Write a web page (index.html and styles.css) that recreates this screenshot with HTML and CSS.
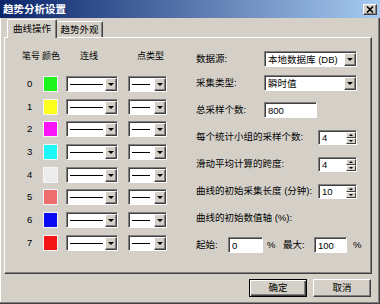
FILE: index.html
```html
<!DOCTYPE html>
<html>
<head>
<meta charset="utf-8">
<link rel="stylesheet" href="styles.css">
</head>
<body>
<div class="window">
  <div class="titlebar">
    <span class="title">趋势分析设置</span>
    <span class="close"><svg width="8" height="7" viewBox="0 0 8 7"><path d="M1 0.5 L7 6.5 M7 0.5 L1 6.5" stroke="#000" stroke-width="1.6"/></svg></span>
  </div>
  <div class="tabs">
    <div class="tab active">曲线操作</div>
    <div class="tab second">趋势外观</div>
  </div>
  <div class="panel">
    <div class="left">
      <div class="head">
        <span class="h-num">笔号</span><span class="h-color">颜色</span><span class="h-line">连线</span><span class="h-pt">点类型</span>
      </div>
      <div class="pens">
        <div class="pen"><span class="num">0</span><span class="sw" style="background:#1ef51e"></span><span class="combo line"><span class="field"><i class="stroke"></i></span><span class="arrow"></span></span><span class="combo pt"><span class="field"><i class="stroke"></i></span><span class="arrow"></span></span></div>
        <div class="pen"><span class="num">1</span><span class="sw" style="background:#ffff1e"></span><span class="combo line"><span class="field"><i class="stroke"></i></span><span class="arrow"></span></span><span class="combo pt"><span class="field"><i class="stroke"></i></span><span class="arrow"></span></span></div>
        <div class="pen"><span class="num">2</span><span class="sw" style="background:#fa14fa"></span><span class="combo line"><span class="field"><i class="stroke"></i></span><span class="arrow"></span></span><span class="combo pt"><span class="field"><i class="stroke"></i></span><span class="arrow"></span></span></div>
        <div class="pen"><span class="num">3</span><span class="sw" style="background:#1ef8f8"></span><span class="combo line"><span class="field"><i class="stroke"></i></span><span class="arrow"></span></span><span class="combo pt"><span class="field"><i class="stroke"></i></span><span class="arrow"></span></span></div>
        <div class="pen"><span class="num">4</span><span class="sw" style="background:#ececec"></span><span class="combo line"><span class="field"><i class="stroke"></i></span><span class="arrow"></span></span><span class="combo pt"><span class="field"><i class="stroke"></i></span><span class="arrow"></span></span></div>
        <div class="pen"><span class="num">5</span><span class="sw" style="background:#ee6e6e"></span><span class="combo line"><span class="field"><i class="stroke"></i></span><span class="arrow"></span></span><span class="combo pt"><span class="field"><i class="stroke"></i></span><span class="arrow"></span></span></div>
        <div class="pen"><span class="num">6</span><span class="sw" style="background:#0a0af5"></span><span class="combo line"><span class="field"><i class="stroke"></i></span><span class="arrow"></span></span><span class="combo pt"><span class="field"><i class="stroke"></i></span><span class="arrow"></span></span></div>
        <div class="pen"><span class="num">7</span><span class="sw" style="background:#f51414"></span><span class="combo line"><span class="field"><i class="stroke"></i></span><span class="arrow"></span></span><span class="combo pt"><span class="field"><i class="stroke"></i></span><span class="arrow"></span></span></div>
      </div>
    </div>
    <div class="right">
      <div class="rrow"><span class="lbl">数据源:</span><span class="combo wide"><span class="field txt">本地数据库 (DB)</span><span class="arrow"></span></span></div>
      <div class="rrow tight"><span class="lbl">采集类型:</span><span class="combo wide"><span class="field txt">瞬时值</span><span class="arrow"></span></span></div>
      <div class="rrow"><span class="lbl">总采样个数:</span><span class="edit e800">800</span></div>
      <div class="rrow"><span class="lbl long">每个统计小组的采样个数:</span><span class="spin"><span class="field txt">4</span><span class="btns"><span class="up"></span><span class="dn"></span></span></span></div>
      <div class="rrow"><span class="lbl long">滑动平均计算的跨度:</span><span class="spin"><span class="field txt">4</span><span class="btns"><span class="up"></span><span class="dn"></span></span></span></div>
      <div class="rrow"><span class="lbl long">曲线的初始采集长度 (分钟):</span><span class="spin"><span class="field txt">10</span><span class="btns"><span class="up"></span><span class="dn"></span></span></span></div>
      <div class="rrow"><span class="lbl">曲线的初始数值轴 (%):</span></div>
      <div class="rrow"><span class="lbl short">起始:</span><span class="edit e-min">0</span><span class="pct">%</span><span class="lbl max">最大:</span><span class="edit e-max">100</span><span class="pct last">%</span></div>
    </div>
  </div>
  <div class="buttons">
    <button class="btn default">确定</button>
    <button class="btn">取消</button>
  </div>
</div>
</body>
</html>
```
FILE: styles.css
```css
* { box-sizing: border-box; }
html, body { margin: 0; padding: 0; }
body {
  width: 380px; height: 304px; overflow: hidden;
  font-family: "Liberation Sans", "Noto Sans CJK SC", sans-serif;
  font-size: 9.5px; color: #000; background: #d4d0c8;
}
.window {
  width: 380px; height: 304px;
  display: flex; flex-direction: column;
  background: #d4d0c8;
  box-shadow: inset -1px -1px #404040, inset -2px -2px #808080, inset 1px 0 #fff;
}
.titlebar {
  flex: none; height: 18px;
  display: flex; align-items: center; justify-content: space-between;
  padding: 0 3px;
  background: linear-gradient(to right, #0a246a, #a6caf0);
}
.title {
  color: #fff; font-weight: bold; font-size: 10.5px; line-height: 12px;
  font-family: "Noto Sans CJK SC", sans-serif;
}
.close {
  width: 14px; height: 11px; background: #d4d0c8;
  border: 1px solid; border-color: #fff #404040 #404040 #fff;
  box-shadow: inset -1px -1px #808080;
  display: flex; align-items: center; justify-content: center;
}
.close svg { display: block; }
.tabs {
  flex: none; height: 18px; margin-top: 1px; padding-left: 7px;
  display: flex; align-items: flex-end;
  position: relative; z-index: 1;
}
.tab {
  height: 16px; width: 46px;
  display: flex; align-items: center; justify-content: center;
  background: #d4d0c8;
  border-top: 1px solid #fff; border-left: 1px solid #fff; border-right: 1px solid #404040;
  box-shadow: inset -1px 0 #808080;
  border-radius: 2px 2px 0 0;
  line-height: 12px; white-space: nowrap;
}
.tab.active { height: 19px; width: 50px; margin-bottom: -1px; }
.tab.second { border-left: none; }
.panel {
  flex: none; height: 237px; margin: 0 8px 0 4px;
  display: flex;
  border: 1px solid; border-color: #fff #404040 #404040 #fff;
  box-shadow: inset -1px -1px #808080;
}
.left { width: 191px; flex: none; padding: 12px 0 0 19px; }
.head { display: flex; height: 12px; line-height: 12px; margin-left: -2px; white-space: nowrap; font-size: 9px; }
.h-num { width: 20px; flex: none; }
.h-color { width: 38px; flex: none; }
.h-line { width: 57px; flex: none; }
.pens { margin-top: 14px; display: flex; flex-direction: column; gap: 6.7px; }
.pen { display: flex; align-items: center; height: 16px; }
.num { width: 19px; padding-left: 3px; line-height: 12px; }
.sw { width: 15px; height: 16px; border: 1px solid #f4f4f4; }
.combo {
  display: flex; height: 16px; background: #fff;
  border: 1px solid; border-color: #808080 #fff #fff #808080;
  box-shadow: inset 1px 1px #404040;
}
.combo.line { width: 52px; margin-left: 8px; }
.combo.pt { width: 39px; margin-left: 10px; }
.combo.wide { width: 93px; height: 16px; }
.field { flex: 1; display: flex; align-items: center; padding: 1px 0 0 1px; min-width: 0; }
.field.txt { padding-left: 3px; line-height: 12px; white-space: pre; overflow: hidden; }
.stroke { display: block; height: 1px; background: #000; flex: 1; margin: 0 2px 0 2px; }
.combo.pt .stroke { margin-right: 4px; }
.arrow {
  width: 12px; flex: none; margin: 1px 0 0 0;
  background: #d4d0c8;
  border: 1px solid; border-color: #fff #404040 #404040 #fff;
  box-shadow: inset -1px -1px #808080;
  display: flex; align-items: center; justify-content: center;
}
.arrow::after {
  content: ""; width: 0; height: 0;
  border-left: 3px solid transparent; border-right: 3px solid transparent;
  border-top: 3px solid #000;
}
.right {
  flex: 1; padding-top: 12px;
  display: flex; flex-direction: column; gap: 9px;
}
.rrow { display: flex; align-items: center; height: 18px; line-height: 12px; white-space: nowrap; }
.rrow.tight { margin-top: -3px; }
.lbl { width: 68px; flex: none; }
.lbl.long { width: 122px; }
.lbl.short { width: 32px; }
.lbl.max { width: 31px; }
.edit {
  height: 16px; background: #fff; display: flex; align-items: center; padding: 1px 0 0 3px;
  border: 1px solid; border-color: #808080 #fff #fff #808080;
  box-shadow: inset 1px 1px #404040;
}
.e800 { width: 53px; }
.e-min { width: 35px; }
.e-max { width: 33px; }
.pct { width: 16px; margin-left: 4px; }
.pct.last { margin-left: 6px; }
.spin {
  display: flex; width: 39px; height: 15px; background: #fff;
  border: 1px solid; border-color: #808080 #fff #fff #808080;
  box-shadow: inset 1px 1px #404040;
}
.btns { width: 10px; flex: none; display: flex; flex-direction: column; margin-top: 1px; }
.btns span {
  flex: 1; background: #d4d0c8;
  border: 1px solid; border-color: #fff #404040 #404040 #fff;
  display: flex; align-items: center; justify-content: center;
}
.btns .up::after {
  content: ""; border-left: 2px solid transparent; border-right: 2px solid transparent;
  border-bottom: 2px solid #000;
}
.btns .dn::after {
  content: ""; border-left: 2px solid transparent; border-right: 2px solid transparent;
  border-top: 2px solid #000;
}
.buttons {
  flex: none; margin-top: 5px; height: 18px; padding-right: 9px;
  display: flex; justify-content: flex-end; gap: 6px;
}
.btn {
  width: 58px; height: 18px; padding: 0; margin: 0;
  font-family: "Liberation Sans", "Noto Sans CJK SC", sans-serif; font-size: 9.5px; color: #000;
  background: #d4d0c8;
  border: 1px solid; border-color: #fff #404040 #404040 #fff;
  box-shadow: inset -1px -1px #808080;
  line-height: 12px;
}
.btn.default {
  border: 1px solid #000;
  box-shadow: inset 1px 1px #fff, inset -1px -1px #404040, inset -2px -2px #808080;
}
```
